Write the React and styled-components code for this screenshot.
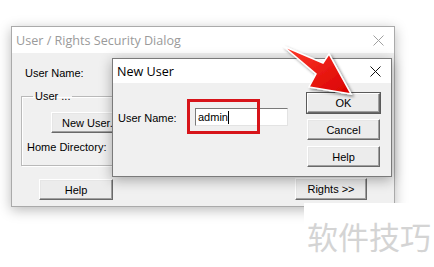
import React from "react";
import styled, { createGlobalStyle } from "styled-components";

const GlobalStyle = createGlobalStyle`
  html, body {
    margin: 0;
    padding: 0;
    background: #ffffff;
  }
  body {
    font-family: "Liberation Sans", Arial, sans-serif;
  }
`;

const Desktop = styled.div`
  position: relative;
  width: 434px;
  height: 267px;
  overflow: hidden;
  background: #ffffff;
`;

// a window sits at its own place on the desktop
const Window = styled.div`
  position: absolute;
  left: ${(p) => p.$left}px;
  top: ${(p) => p.$top}px;
  width: ${(p) => p.$width}px;
  height: ${(p) => p.$height}px;
  box-sizing: border-box;
  border: 1px solid ${(p) => (p.$active ? "#7a7a7a" : "#aaaaaa")};
  background: #f0f0f0;
  display: flex;
  flex-direction: column;
  box-shadow: 0 3px 12px rgba(0, 0, 0, ${(p) => (p.$active ? 0.32 : 0.28)});
`;

const TitleBar = styled.div`
  height: ${(p) => p.$height}px;
  flex: none;
  background: #ffffff;
  display: flex;
  align-items: center;
  justify-content: space-between;
  padding: 0 ${(p) => p.$padRight}px 0 ${(p) => p.$padLeft}px;
  font-family: "Open Sans", "Noto Sans", sans-serif;
  font-size: 12.6px;
  color: ${(p) => (p.$active ? "#000000" : "#9a9a9a")};
`;

const TitleText = styled.span`
  white-space: nowrap;
`;

const CloseGlyph = ({ color }) => (
  <svg width="11" height="11" viewBox="0 0 11 11">
    <path d="M0.5 0.5 L10.5 10.5 M10.5 0.5 L0.5 10.5" stroke={color} strokeWidth="1" fill="none" />
  </svg>
);

const OuterBody = styled.div`
  flex: 1;
  display: flex;
  flex-direction: column;
  padding: 14px 12px 0 9px;
  font-size: 11px;
  color: #000000;
`;

const Label = styled.span`
  display: block;
  line-height: 13px;
  white-space: nowrap;
  margin-left: ${(p) => p.$indent || 0}px;
`;

const GroupBox = styled.fieldset`
  margin: 10px 0 0 0;
  padding: 9px 0 11px 5px;
  border: 1px solid #b9b9b9;
  box-shadow: inset 1px 1px #ffffff, 1px 1px #ffffff;
  min-width: 0;
`;

const Legend = styled.legend`
  padding: 0 2px;
  margin-left: 6px;
  line-height: 13px;
  font-size: 11px;
`;

const Button = styled.button`
  box-sizing: border-box;
  width: ${(p) => p.$width}px;
  height: ${(p) => p.$height || 21}px;
  margin: 0;
  padding: 0;
  background: #ececec;
  border: 1px solid;
  border-color: #ffffff #696969 #696969 #ffffff;
  box-shadow: ${(p) =>
    p.$default
      ? "inset -1px -1px #a0a0a0, 0 0 0 1px #5a5a5a"
      : "inset -1px -1px #a0a0a0, inset 1px 1px #e6e6e6"};
  font-family: "Liberation Sans", Arial, sans-serif;
  font-size: 11px;
  color: #000000;
  text-align: center;
  white-space: nowrap;
  overflow: hidden;
`;

const GroupButton = styled(Button)`
  margin-left: 24px;
  margin-bottom: 8px;
  text-align: left;
  padding-left: 10px;
`;

const BottomRow = styled.div`
  display: flex;
  justify-content: space-between;
  align-items: flex-end;
  margin-top: 12px;
  padding: 0 15px 0 18px;
`;

const InnerBody = styled.div`
  position: relative;
  flex: 1;
  display: flex;
  justify-content: space-between;
  padding: 10px 11px 0 5px;
  font-size: 11px;
  color: #000000;
`;

const FieldRow = styled.div`
  display: flex;
  align-items: center;
  margin-top: 15px;
  align-self: flex-start;
`;

const FieldLabel = styled.span`
  width: 77px;
  line-height: 13px;
  padding-top: 2px;
`;

const TextBox = styled.div`
  box-sizing: border-box;
  width: 93px;
  height: 18px;
  background: #ffffff;
  border: 1px solid;
  border-color: #7a7a7a #e3e3e3 #e3e3e3 #7a7a7a;
  display: flex;
  align-items: center;
  padding-left: 2px;
  font-size: 11px;
  line-height: 13px;
`;

const Caret = styled.span`
  display: inline-block;
  width: 1px;
  height: 13px;
  background: #000000;
`;

const ButtonColumn = styled.div`
  display: flex;
  flex-direction: column;
  gap: 6px;
`;

// red annotation frame drawn over the input
const Highlight = styled.div`
  position: absolute;
  left: 74px;
  top: 16px;
  width: 73px;
  height: 35px;
  box-sizing: border-box;
  border: 3px solid #d7141a;
`;

const ArrowLayer = styled.svg`
  position: absolute;
  left: 275px;
  top: 40px;
`;

const Watermark = styled.div`
  position: absolute;
  left: 304px;
  top: 203px;
  width: 130px;
  height: 64px;
  background: #ffffff;
  display: flex;
  align-items: center;
  padding: 0 0 0 3px;
  box-sizing: border-box;
  font-family: "Noto Sans CJK SC", sans-serif;
  font-size: 31px;
  color: #d4d4d4;
  white-space: nowrap;
`;

const Arrow = () => (
  <ArrowLayer width="85" height="62" viewBox="0 0 85 62">
    <defs>
      <linearGradient id="arrowFill" x1="0" y1="0" x2="1" y2="1">
        <stop offset="0" stopColor="#ff3a2a" />
        <stop offset="1" stopColor="#d80000" />
      </linearGradient>
      <filter id="arrowShadow" x="-20%" y="-20%" width="150%" height="150%">
        <feDropShadow dx="2" dy="2" stdDeviation="1.6" floodColor="#000000" floodOpacity="0.45" />
      </filter>
    </defs>
    <polygon
      points="8,6 48,23 54,14 76,54 34,47 41,34"
      fill="url(#arrowFill)"
      stroke="#ffffff"
      strokeWidth="1.5"
      strokeLinejoin="miter"
      filter="url(#arrowShadow)"
    />
  </ArrowLayer>
);

export default function App() {
  return (
    <Desktop>
      <GlobalStyle />
      <Window $left={11} $top={26} $width={384} $height={181}>
        <TitleBar $height={26} $padLeft={4} $padRight={10}>
          <TitleText>User / Rights Security Dialog</TitleText>
          <CloseGlyph color="#a0a0a0" />
        </TitleBar>
        <OuterBody>
          <Label $indent={4}>User Name:</Label>
          <GroupBox>
            <Legend>User ...</Legend>
            <GroupButton $width={74}>New User...</GroupButton>
            <Label>Home Directory:</Label>
          </GroupBox>
          <BottomRow>
            <Button $width={74}>Help</Button>
            <Button $width={72} $height={22}>Rights &gt;&gt;</Button>
          </BottomRow>
        </OuterBody>
      </Window>

      <Window $active $left={112} $top={58} $width={280} $height={119}>
        <TitleBar $active $height={24} $padLeft={4} $padRight={10}>
          <TitleText>New User</TitleText>
          <CloseGlyph color="#111111" />
        </TitleBar>
        <InnerBody>
          <FieldRow>
            <FieldLabel>User Name:</FieldLabel>
            <TextBox>
              admin
              <Caret />
            </TextBox>
          </FieldRow>
          <ButtonColumn>
            <Button $default $width={73} $height={20}>OK</Button>
            <Button $width={73}>Cancel</Button>
            <Button $width={73}>Help</Button>
          </ButtonColumn>
          <Highlight />
        </InnerBody>
      </Window>

      <Arrow />
      <Watermark>软件技巧</Watermark>
    </Desktop>
  );
}
